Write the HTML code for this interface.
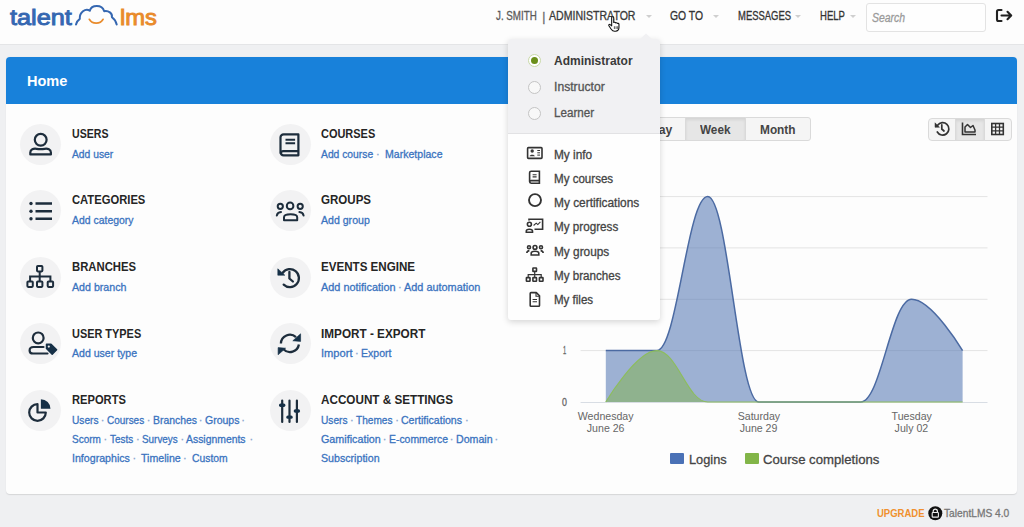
<!DOCTYPE html>
<html><head><meta charset="utf-8">
<style>
*{margin:0;padding:0;box-sizing:border-box}
html,body{width:1024px;height:527px;overflow:hidden;background:#eff0f2;font-family:"Liberation Sans",sans-serif;position:relative}
.abs{position:absolute}
.t{position:absolute;white-space:nowrap;transform-origin:0 0}
#hdr{left:0;top:0;width:1024px;height:45px;background:#fdfdfd;border-bottom:1px solid #e4e5e7}
.caret{position:absolute;top:15px;width:0;height:0;border-left:3px solid transparent;border-right:3px solid transparent;border-top:3px solid #cfcfcf}
#search{left:866px;top:3px;width:120px;height:29px;border:1px solid #e3e3e3;border-radius:3px;background:#fefefe}
#panel{left:6px;top:57px;width:1011px;height:437px;background:#fdfdfd;border-radius:4px;box-shadow:0 0.5px 1px #d5d6d8}
#bluebar{left:6px;top:57px;width:1011px;height:47px;background:#1881da;border-radius:4px 4px 0 0}
.circ{position:absolute;width:41px;height:41px;border-radius:50%;background:#f2f2f3}
.circ svg{position:absolute;left:0;top:0}
#dd{left:508px;top:39px;width:152px;height:281px;background:#fefefe;border-radius:3px;box-shadow:0 2px 6px rgba(0,0,0,0.16)}
#ddtop{left:508px;top:39px;width:152px;height:95px;background:#f1f1f3;border-radius:3px 3px 0 0;border-bottom:1px solid #e2e2e4}
.radio{position:absolute;left:528px;width:13px;height:13px;border-radius:50%;border:1px solid #c4c4c4;background:#f8f8f8}
.btn{position:absolute;height:24px;border:1px solid #dadada;background:#f5f5f5}
</style></head><body>
<div id="hdr" class="abs"></div>
<svg class="abs" style="left:0;top:0" width="160" height="40" viewBox="0 0 160 40">
 <path d="M76 24.5 C76.8 21.8 78 20 79.8 18.8 C79.2 12.8 85.5 7.5 89.8 10.8 C91.5 4.6 102 4.2 104.2 11.2 C108.5 10.4 112.6 13.2 111.9 17.2 C114.2 18.8 116 21.5 116.7 24.5" fill="none" stroke="#3567b1" stroke-width="2" stroke-linecap="round" stroke-linejoin="round"/>
 <path d="M89.4 19.4 C91 22.2 93.2 23.1 96.2 23.1 C99.2 23.1 101.4 22.2 103 19.4" fill="none" stroke="#e98b2b" stroke-width="1.9" stroke-linecap="round"/>
</svg>
<div class="caret" style="left:646px"></div>
<div class="caret" style="left:713px"></div>
<div class="caret" style="left:795px"></div>
<div class="caret" style="left:850px"></div>
<div id="search" class="abs"></div>
<svg class="abs" style="left:995px;top:8px" width="19" height="15" viewBox="0 0 19 15">
 <path d="M6.5 2 H3.5 A1.5 1.5 0 0 0 2 3.5 V11.5 A1.5 1.5 0 0 0 3.5 13 H6.5" fill="none" stroke="#222" stroke-width="2.1" stroke-linecap="round"/>
 <path d="M6.5 7.5 H16 M12.5 3.8 L16.2 7.5 L12.5 11.2" fill="none" stroke="#222" stroke-width="2.1" stroke-linecap="round" stroke-linejoin="round"/>
</svg>

<div id="panel" class="abs"></div>
<div id="bluebar" class="abs"></div>

<!-- icons col1 -->
<div class="circ" style="left:20px;top:123.5px"><svg width="41" height="41" viewBox="0 0 41 41" fill="none" stroke="#1d2d3c" stroke-width="2.2">
 <circle cx="20.7" cy="15.8" r="5.9"/>
 <path d="M10.3 30.4 V28.5 C10.3 25.2 13.5 24.4 16.5 24.8 Q20.6 25.6 24.7 24.8 C27.7 24.4 30.9 25.2 30.9 28.5 V30.4 Z" stroke-linejoin="round"/>
</svg></div>
<div class="circ" style="left:20px;top:190px"><svg width="41" height="41" viewBox="0 0 41 41" fill="none" stroke="#1d2d3c" stroke-width="2.4">
 <path d="M15.5 13.5 H32 M15.5 21.2 H32 M15.5 28.7 H32"/>
 <circle cx="11" cy="13.5" r="1.7" fill="#1d2d3c" stroke="none"/><circle cx="11" cy="21.2" r="1.7" fill="#1d2d3c" stroke="none"/><circle cx="11" cy="28.7" r="1.7" fill="#1d2d3c" stroke="none"/>
</svg></div>
<div class="circ" style="left:20px;top:256.5px"><svg width="41" height="41" viewBox="0 0 41 41" fill="none" stroke="#1d2d3c" stroke-width="2">
 <rect x="17" y="9" width="5.4" height="5.4" rx="0.8"/>
 <rect x="7.4" y="24.5" width="5.4" height="5.4" rx="0.8"/><rect x="17" y="24.5" width="5.4" height="5.4" rx="0.8"/><rect x="27.7" y="24.5" width="5.4" height="5.4" rx="0.8"/>
 <path d="M19.7 14.4 V24.5 M10.1 24.5 V19.5 H30.4 V24.5"/>
</svg></div>
<div class="circ" style="left:20px;top:323px"><svg width="41" height="41" viewBox="0 0 41 41" fill="none" stroke="#1d2d3c" stroke-width="2.2">
 <circle cx="18.2" cy="14.9" r="5.4"/>
 <path d="M23.5 24 H13.5 C11 24 9.6 25.6 9.6 27.4 C9.6 29.3 11 30.5 13 30.5 H27.5" stroke-linecap="round"/>
 <path d="M26.5 21.2 H31 L36.6 26.8 L32.2 31.2 L26.5 25.5 Z" fill="#163047" stroke="#163047" stroke-width="1.5" stroke-linejoin="round"/>
 <circle cx="28.8" cy="23.6" r="1.1" fill="#f0f0f1" stroke="none"/>
</svg></div>
<div class="circ" style="left:20px;top:390px"><svg width="41" height="41" viewBox="0 0 41 41" fill="none" stroke="#1d2d3c" stroke-width="2.2">
 <path d="M17.5 14.2 A8.3 8.3 0 1 0 25.8 22.5 H17.5 Z" stroke-linejoin="round"/>
 <path d="M20.9 18.8 V9.2 A9.6 9.6 0 0 1 30.5 18.8 Z" fill="#163047" stroke="none"/>
</svg></div>

<!-- icons col2 -->
<div class="circ" style="left:269.8px;top:123.5px"><svg width="41" height="41" viewBox="0 0 41 41" fill="none" stroke="#1d2d3c" stroke-width="2.2">
 <path d="M28.4 10.4 H13.6 A3.1 3.1 0 0 0 10.5 13.5 V28.2 A3.1 3.1 0 0 0 13.6 31.3 H28.4 Z" stroke-linejoin="round"/>
 <path d="M10.8 29.5 A2.4 2.4 0 0 1 13.2 27.2 H28.4"/>
 <path d="M15.5 15.8 H25.1 M15.5 19.3 H25.1" stroke-width="2"/>
</svg></div>
<div class="circ" style="left:269.8px;top:190px"><svg width="41" height="41" viewBox="0 0 41 41" fill="none" stroke="#1d2d3c" stroke-width="2">
 <circle cx="20.1" cy="15.9" r="3.3"/>
 <circle cx="10.3" cy="16.3" r="2.6"/><circle cx="30.2" cy="16.3" r="2.6"/>
 <path d="M14 30.2 V27.2 C14 25 16.5 24.3 20.6 24.3 C24.7 24.3 27.2 25 27.2 27.2 V30.2 Z" stroke-linejoin="round"/>
 <path d="M6.8 25.6 C7.2 23.6 8.8 22.3 11 22.1 M33.6 25.6 C33.2 23.6 31.6 22.3 29.4 22.1" stroke-linecap="round"/>
</svg></div>
<div class="circ" style="left:269.8px;top:256.5px"><svg width="41" height="41" viewBox="0 0 41 41" fill="none" stroke="#1d2d3c" stroke-width="2.3">
 <path d="M12.7 15.7 A9 9 0 1 1 13.7 27.6" stroke-linecap="round"/>
 <path d="M7.8 11.8 V18.2 H14.8 Z" fill="#163047" stroke="#163047" stroke-width="0.6" stroke-linejoin="round"/>
 <path d="M19.4 15 V21.5 L22.9 24.5" stroke-linecap="round" stroke-linejoin="round"/>
</svg></div>
<div class="circ" style="left:269.8px;top:323px"><svg width="41" height="41" viewBox="0 0 41 41" fill="none" stroke="#1d2d3c" stroke-width="2.3">
 <path d="M10.9 20.5 A9 9 0 0 1 26 14.2"/>
 <path d="M22.8 17.8 L30.6 10.8 V18.4 Z" fill="#163047" stroke="#163047" stroke-width="0.6" stroke-linejoin="round"/>
 <path d="M28.9 21.5 A9 9 0 0 1 13.5 26.2"/>
 <path d="M8.1 24.6 V31.8 L15.6 25.2 Z" fill="#163047" stroke="#163047" stroke-width="0.6" stroke-linejoin="round"/>
</svg></div>
<div class="circ" style="left:269.8px;top:390px"><svg width="41" height="41" viewBox="0 0 41 41" fill="none" stroke="#1d2d3c" stroke-width="2.2">
 <path d="M12.2 10.5 V32 M19.5 10.5 V32 M26.9 10.5 V32" stroke-linecap="round"/>
 <rect x="9" y="13.5" width="6.4" height="3.4" rx="1.6" fill="#163047" stroke="none"/>
 <rect x="16.3" y="25.4" width="6.4" height="3.4" rx="1.6" fill="#163047" stroke="none"/>
 <rect x="23.7" y="19.3" width="6.4" height="3.4" rx="1.6" fill="#163047" stroke="none"/>
</svg></div>

<!-- chart buttons -->
<div class="btn" style="left:600px;top:117px;width:86px;border-radius:3px 0 0 3px"></div>
<div class="btn" style="left:685.3px;top:117px;width:60.5px;background:#e6e6e6;box-shadow:inset 0 2px 3px rgba(0,0,0,0.08)"></div>
<div class="btn" style="left:745px;top:117px;width:66.3px;border-radius:0 3px 3px 0"></div>
<div class="btn" style="left:927.8px;top:117.5px;width:28px;height:23px;border-radius:4px 0 0 4px"></div>
<div class="btn" style="left:955px;top:117.5px;width:29.5px;height:23px;background:#e6e6e6;box-shadow:inset 0 2px 3px rgba(0,0,0,0.08)"></div>
<div class="btn" style="left:983.5px;top:117.5px;width:28px;height:23px;border-radius:0 4px 4px 0"></div>
<svg class="abs" style="left:930px;top:118px" width="80" height="22" viewBox="0 0 80 22" fill="none" stroke="#333" stroke-width="1.7">
 <path d="M7.6 7.3 A6.2 6.2 0 1 1 7.3 14" stroke-linecap="round"/>
 <path d="M5 4.8 V9.3 H9.5 Z" fill="#333" stroke="#333" stroke-width="0.5"/>
 <path d="M11.8 6.8 V11 L14 13" stroke-linecap="round"/>
 <path d="M32.5 4.5 V16.5 H46" stroke-width="1.6"/>
 <path d="M35 14 V9 L37.5 6.5 L40.5 9.5 L43 7.5 L45 12 V14 Z" stroke-width="1.5" stroke-linejoin="round"/>
 <rect x="61.8" y="5.5" width="11.5" height="11" stroke-width="1.6"/>
 <path d="M61.8 9.2 H73.3 M61.8 12.9 H73.3 M65.6 5.5 V16.5 M69.5 5.5 V16.5" stroke-width="1.3"/>
</svg>

<svg class="abs" style="left:0;top:0" width="1024" height="527" viewBox="0 0 1024 527">
<line x1="580.6" x2="987.5" y1="350.6" y2="350.6" stroke="#e4e4e4" stroke-width="1"/><line x1="580.6" x2="987.5" y1="299.3" y2="299.3" stroke="#e4e4e4" stroke-width="1"/><line x1="580.6" x2="987.5" y1="247.9" y2="247.9" stroke="#e4e4e4" stroke-width="1"/><line x1="580.6" x2="987.5" y1="196.6" y2="196.6" stroke="#e4e4e4" stroke-width="1"/><line x1="580.6" x2="987.5" y1="402.5" y2="402.5" stroke="#d8dde4" stroke-width="1"/>
<path d="M 605.8 350.6 C 605.8 350.6 636.4 350.6 656.8 350.6 C 677.2 350.6 687.4 196.6 707.7 196.6 C 728.1 196.6 738.3 402.0 758.7 402.0 C 779.1 402.0 789.3 402.0 809.7 402.0 C 830.1 402.0 840.3 402.0 860.6 402.0 C 881.0 402.0 891.2 299.3 911.6 299.3 C 932.0 299.3 962.6 350.6 962.6 350.6 L 962.6 402.0 L 605.8 402.0 Z" fill="rgba(79,115,177,0.55)"/>
<path d="M 605.8 350.6 C 605.8 350.6 636.4 350.6 656.8 350.6 C 677.2 350.6 687.4 196.6 707.7 196.6 C 728.1 196.6 738.3 402.0 758.7 402.0 C 779.1 402.0 789.3 402.0 809.7 402.0 C 830.1 402.0 840.3 402.0 860.6 402.0 C 881.0 402.0 891.2 299.3 911.6 299.3 C 932.0 299.3 962.6 350.6 962.6 350.6" fill="none" stroke="#4b6aa2" stroke-width="1.5"/>
<path d="M 605.8 402.0 C 605.8 402.0 636.4 350.6 656.8 350.6 C 677.2 350.6 687.4 402.0 707.7 402.0 C 728.1 402.0 738.3 402.0 758.7 402.0 C 779.1 402.0 789.3 402.0 809.7 402.0 C 830.1 402.0 840.3 402.0 860.6 402.0 C 881.0 402.0 891.2 402.0 911.6 402.0 C 932.0 402.0 962.6 402.0 962.6 402.0 L 962.6 402.0 L 605.8 402.0 Z" fill="rgba(133,178,96,0.6)"/>
<path d="M 605.8 402.0 C 605.8 402.0 636.4 350.6 656.8 350.6 C 677.2 350.6 687.4 402.0 707.7 402.0 C 728.1 402.0 738.3 402.0 758.7 402.0 C 779.1 402.0 789.3 402.0 809.7 402.0 C 830.1 402.0 840.3 402.0 860.6 402.0 C 881.0 402.0 891.2 402.0 911.6 402.0 C 932.0 402.0 962.6 402.0 962.6 402.0" fill="none" stroke="#8dbd5e" stroke-width="1.1"/>
</svg>
<!-- legend squares -->
<div class="abs" style="left:670px;top:452.8px;width:14px;height:11.5px;background:#4a71b6;border-radius:1px"></div>
<div class="abs" style="left:744.5px;top:452.8px;width:14px;height:11.5px;background:#82b548;border-radius:1px"></div>

<!-- footer lock -->
<svg class="abs" style="left:927.5px;top:505.5px" width="15" height="15" viewBox="0 0 15 15">
 <circle cx="7.3" cy="7.3" r="7" fill="#111"/>
 <path d="M5.2 6.5 V5.2 A2.1 2.1 0 0 1 9.4 5.2 V6.5" fill="none" stroke="#eee" stroke-width="1.2"/>
 <rect x="4.2" y="6.5" width="6.2" height="4.6" rx="0.7" fill="none" stroke="#eee" stroke-width="1.1"/>
</svg>

<div class="t" id="t0" style="left:495.9px;top:10.28px;font-size:12px;line-height:12px;font-weight:normal;color:#5b5b5b;transform:scaleX(0.8160);-webkit-text-stroke:0.3px #5b5b5b;">J. SMITH</div>
<div class="t" id="t1" style="left:542.2px;top:10.98px;font-size:12px;line-height:12px;font-weight:normal;color:#666;-webkit-text-stroke:0.3px #666;">|</div>
<div class="t" id="t2" style="left:549px;top:10.28px;font-size:12px;line-height:12px;font-weight:normal;color:#3a3a3a;transform:scaleX(0.8806);-webkit-text-stroke:0.3px #3a3a3a;">ADMINISTRATOR</div>
<div class="t" id="t3" style="left:669.8px;top:10.28px;font-size:12px;line-height:12px;font-weight:normal;color:#333;transform:scaleX(0.8632);-webkit-text-stroke:0.3px #333;">GO TO</div>
<div class="t" id="t4" style="left:737.7px;top:10.28px;font-size:12px;line-height:12px;font-weight:normal;color:#333;transform:scaleX(0.7881);-webkit-text-stroke:0.3px #333;">MESSAGES</div>
<div class="t" id="t5" style="left:820px;top:10.28px;font-size:12px;line-height:12px;font-weight:normal;color:#333;transform:scaleX(0.7935);-webkit-text-stroke:0.3px #333;">HELP</div>
<div class="t" id="t6" style="left:872px;top:11.68px;font-size:12px;line-height:12px;font-weight:normal;color:#9a9a9a;transform:scaleX(0.8684);font-style:italic;-webkit-text-stroke:0.3px #9a9a9a;">Search</div>
<div class="t" id="t7" style="left:9.7px;top:7.51px;font-size:21.5px;line-height:21.5px;font-weight:normal;color:#3567b1;transform:scaleX(1.1755);-webkit-text-stroke:0.9px #3567b1;">talent</div>
<div class="t" id="t8" style="left:119.5px;top:7.51px;font-size:21.5px;line-height:21.5px;font-weight:normal;color:#e98b2b;transform:scaleX(1.1061);-webkit-text-stroke:0.9px #e98b2b;">lms</div>
<div class="t" id="t9" style="left:26.5px;top:73.17px;font-size:15.5px;line-height:15.5px;font-weight:bold;color:#fff;transform:scaleX(0.9372);">Home</div>
<div class="t" id="t10" style="left:71.8px;top:127.75px;font-size:12.5px;line-height:12.5px;font-weight:bold;color:#252525;transform:scaleX(0.8465);">USERS</div>
<div class="t" id="t11" style="left:71.8px;top:194.40px;font-size:12.5px;line-height:12.5px;font-weight:bold;color:#252525;transform:scaleX(0.8976);">CATEGORIES</div>
<div class="t" id="t12" style="left:71.8px;top:261.05px;font-size:12.5px;line-height:12.5px;font-weight:bold;color:#252525;transform:scaleX(0.9056);">BRANCHES</div>
<div class="t" id="t13" style="left:71.8px;top:327.70px;font-size:12.5px;line-height:12.5px;font-weight:bold;color:#252525;transform:scaleX(0.8734);">USER TYPES</div>
<div class="t" id="t14" style="left:71.8px;top:394.35px;font-size:12.5px;line-height:12.5px;font-weight:bold;color:#252525;transform:scaleX(0.8917);">REPORTS</div>
<div class="t" id="t15" style="left:320.8px;top:127.75px;font-size:12.5px;line-height:12.5px;font-weight:bold;color:#252525;transform:scaleX(0.8774);">COURSES</div>
<div class="t" id="t16" style="left:320.8px;top:194.40px;font-size:12.5px;line-height:12.5px;font-weight:bold;color:#252525;transform:scaleX(0.9241);">GROUPS</div>
<div class="t" id="t17" style="left:320.8px;top:261.05px;font-size:12.5px;line-height:12.5px;font-weight:bold;color:#252525;transform:scaleX(0.9277);">EVENTS ENGINE</div>
<div class="t" id="t18" style="left:320.8px;top:327.70px;font-size:12.5px;line-height:12.5px;font-weight:bold;color:#252525;transform:scaleX(0.9396);">IMPORT - EXPORT</div>
<div class="t" id="t19" style="left:320.8px;top:394.35px;font-size:12.5px;line-height:12.5px;font-weight:bold;color:#252525;transform:scaleX(0.9362);">ACCOUNT &amp; SETTINGS</div>
<div class="t" id="t20" style="left:71.8px;top:148.54px;font-size:11px;line-height:11px;font-weight:normal;color:#3a73bf;transform:scaleX(0.9364);-webkit-text-stroke:0.3px #3a73bf;">Add user</div>
<div class="t" id="t21" style="left:71.8px;top:215.19px;font-size:11px;line-height:11px;font-weight:normal;color:#3a73bf;transform:scaleX(0.9492);-webkit-text-stroke:0.3px #3a73bf;">Add category</div>
<div class="t" id="t22" style="left:71.8px;top:281.84px;font-size:11px;line-height:11px;font-weight:normal;color:#3a73bf;transform:scaleX(0.9679);-webkit-text-stroke:0.3px #3a73bf;">Add branch</div>
<div class="t" id="t23" style="left:71.8px;top:348.49px;font-size:11px;line-height:11px;font-weight:normal;color:#3a73bf;transform:scaleX(0.9588);-webkit-text-stroke:0.3px #3a73bf;">Add user type</div>
<div class="t" id="t24" style="left:71.5px;top:415.14px;font-size:11px;line-height:11px;font-weight:normal;color:#3a73bf;transform:scaleX(0.9241);-webkit-text-stroke:0.3px #3a73bf;">Users</div>
<div class="t" id="t25" style="left:106.6px;top:415.14px;font-size:11px;line-height:11px;font-weight:normal;color:#3a73bf;transform:scaleX(0.9073);-webkit-text-stroke:0.3px #3a73bf;">Courses</div>
<div class="t" id="t26" style="left:152.5px;top:415.14px;font-size:11px;line-height:11px;font-weight:normal;color:#3a73bf;transform:scaleX(0.9457);-webkit-text-stroke:0.3px #3a73bf;">Branches</div>
<div class="t" id="t27" style="left:204.6px;top:415.14px;font-size:11px;line-height:11px;font-weight:normal;color:#3a73bf;transform:scaleX(0.9556);-webkit-text-stroke:0.3px #3a73bf;">Groups</div>
<div class="t" id="t28" style="left:100.8px;top:415.14px;font-size:11px;line-height:11px;font-weight:normal;color:#8aa6cf;-webkit-text-stroke:0.3px #8aa6cf;">·</div>
<div class="t" id="t29" style="left:146.7px;top:415.14px;font-size:11px;line-height:11px;font-weight:normal;color:#8aa6cf;-webkit-text-stroke:0.3px #8aa6cf;">·</div>
<div class="t" id="t30" style="left:198.8px;top:415.14px;font-size:11px;line-height:11px;font-weight:normal;color:#8aa6cf;-webkit-text-stroke:0.3px #8aa6cf;">·</div>
<div class="t" id="t31" style="left:241.2px;top:415.14px;font-size:11px;line-height:11px;font-weight:normal;color:#8aa6cf;-webkit-text-stroke:0.3px #8aa6cf;">·</div>
<div class="t" id="t32" style="left:71.5px;top:434.14px;font-size:11px;line-height:11px;font-weight:normal;color:#3a73bf;transform:scaleX(0.9094);-webkit-text-stroke:0.3px #3a73bf;">Scorm</div>
<div class="t" id="t33" style="left:109.6px;top:434.14px;font-size:11px;line-height:11px;font-weight:normal;color:#3a73bf;transform:scaleX(0.9000);-webkit-text-stroke:0.3px #3a73bf;">Tests</div>
<div class="t" id="t34" style="left:141.8px;top:434.14px;font-size:11px;line-height:11px;font-weight:normal;color:#3a73bf;transform:scaleX(0.9000);-webkit-text-stroke:0.3px #3a73bf;">Surveys</div>
<div class="t" id="t35" style="left:186.4px;top:434.14px;font-size:11px;line-height:11px;font-weight:normal;color:#3a73bf;transform:scaleX(0.9460);-webkit-text-stroke:0.3px #3a73bf;">Assignments</div>
<div class="t" id="t36" style="left:103.6px;top:434.14px;font-size:11px;line-height:11px;font-weight:normal;color:#8aa6cf;-webkit-text-stroke:0.3px #8aa6cf;">·</div>
<div class="t" id="t37" style="left:135.9px;top:434.14px;font-size:11px;line-height:11px;font-weight:normal;color:#8aa6cf;-webkit-text-stroke:0.3px #8aa6cf;">·</div>
<div class="t" id="t38" style="left:180.6px;top:434.14px;font-size:11px;line-height:11px;font-weight:normal;color:#8aa6cf;-webkit-text-stroke:0.3px #8aa6cf;">·</div>
<div class="t" id="t39" style="left:249.5px;top:434.14px;font-size:11px;line-height:11px;font-weight:normal;color:#8aa6cf;-webkit-text-stroke:0.3px #8aa6cf;">·</div>
<div class="t" id="t40" style="left:71.5px;top:453.14px;font-size:11px;line-height:11px;font-weight:normal;color:#3a73bf;transform:scaleX(0.9667);-webkit-text-stroke:0.3px #3a73bf;">Infographics</div>
<div class="t" id="t41" style="left:140.6px;top:453.14px;font-size:11px;line-height:11px;font-weight:normal;color:#3a73bf;transform:scaleX(0.9659);-webkit-text-stroke:0.3px #3a73bf;">Timeline</div>
<div class="t" id="t42" style="left:191.5px;top:453.14px;font-size:11px;line-height:11px;font-weight:normal;color:#3a73bf;transform:scaleX(0.9395);-webkit-text-stroke:0.3px #3a73bf;">Custom</div>
<div class="t" id="t43" style="left:132.5px;top:453.14px;font-size:11px;line-height:11px;font-weight:normal;color:#8aa6cf;-webkit-text-stroke:0.3px #8aa6cf;">·</div>
<div class="t" id="t44" style="left:183.0px;top:453.14px;font-size:11px;line-height:11px;font-weight:normal;color:#8aa6cf;-webkit-text-stroke:0.3px #8aa6cf;">·</div>
<div class="t" id="t45" style="left:321px;top:148.54px;font-size:11px;line-height:11px;font-weight:normal;color:#3a73bf;transform:scaleX(0.9375);-webkit-text-stroke:0.3px #3a73bf;">Add course</div>
<div class="t" id="t46" style="left:385px;top:148.54px;font-size:11px;line-height:11px;font-weight:normal;color:#3a73bf;transform:scaleX(0.9600);-webkit-text-stroke:0.3px #3a73bf;">Marketplace</div>
<div class="t" id="t47" style="left:376.0px;top:148.54px;font-size:11px;line-height:11px;font-weight:normal;color:#8aa6cf;-webkit-text-stroke:0.3px #8aa6cf;">·</div>
<div class="t" id="t48" style="left:321px;top:215.19px;font-size:11px;line-height:11px;font-weight:normal;color:#3a73bf;transform:scaleX(0.9608);-webkit-text-stroke:0.3px #3a73bf;">Add group</div>
<div class="t" id="t49" style="left:321px;top:281.84px;font-size:11px;line-height:11px;font-weight:normal;color:#3a73bf;transform:scaleX(0.9907);-webkit-text-stroke:0.3px #3a73bf;">Add notification</div>
<div class="t" id="t50" style="left:403.5px;top:281.84px;font-size:11px;line-height:11px;font-weight:normal;color:#3a73bf;transform:scaleX(0.9896);-webkit-text-stroke:0.3px #3a73bf;">Add automation</div>
<div class="t" id="t51" style="left:398.0px;top:281.84px;font-size:11px;line-height:11px;font-weight:normal;color:#8aa6cf;-webkit-text-stroke:0.3px #8aa6cf;">·</div>
<div class="t" id="t52" style="left:321px;top:348.49px;font-size:11px;line-height:11px;font-weight:normal;color:#3a73bf;transform:scaleX(1.0097);-webkit-text-stroke:0.3px #3a73bf;">Import</div>
<div class="t" id="t53" style="left:361px;top:348.49px;font-size:11px;line-height:11px;font-weight:normal;color:#3a73bf;transform:scaleX(0.9563);-webkit-text-stroke:0.3px #3a73bf;">Export</div>
<div class="t" id="t54" style="left:355.0px;top:348.49px;font-size:11px;line-height:11px;font-weight:normal;color:#8aa6cf;-webkit-text-stroke:0.3px #8aa6cf;">·</div>
<div class="t" id="t55" style="left:320.6px;top:415.14px;font-size:11px;line-height:11px;font-weight:normal;color:#3a73bf;transform:scaleX(0.9241);-webkit-text-stroke:0.3px #3a73bf;">Users</div>
<div class="t" id="t56" style="left:355.7px;top:415.14px;font-size:11px;line-height:11px;font-weight:normal;color:#3a73bf;transform:scaleX(0.9175);-webkit-text-stroke:0.3px #3a73bf;">Themes</div>
<div class="t" id="t57" style="left:401px;top:415.14px;font-size:11px;line-height:11px;font-weight:normal;color:#3a73bf;transform:scaleX(0.9594);-webkit-text-stroke:0.3px #3a73bf;">Certifications</div>
<div class="t" id="t58" style="left:350.0px;top:415.14px;font-size:11px;line-height:11px;font-weight:normal;color:#8aa6cf;-webkit-text-stroke:0.3px #8aa6cf;">·</div>
<div class="t" id="t59" style="left:395.2px;top:415.14px;font-size:11px;line-height:11px;font-weight:normal;color:#8aa6cf;-webkit-text-stroke:0.3px #8aa6cf;">·</div>
<div class="t" id="t60" style="left:465.0px;top:415.14px;font-size:11px;line-height:11px;font-weight:normal;color:#8aa6cf;-webkit-text-stroke:0.3px #8aa6cf;">·</div>
<div class="t" id="t61" style="left:320.6px;top:434.14px;font-size:11px;line-height:11px;font-weight:normal;color:#3a73bf;transform:scaleX(0.9770);-webkit-text-stroke:0.3px #3a73bf;">Gamification</div>
<div class="t" id="t62" style="left:388.5px;top:434.14px;font-size:11px;line-height:11px;font-weight:normal;color:#3a73bf;transform:scaleX(0.9468);-webkit-text-stroke:0.3px #3a73bf;">E-commerce</div>
<div class="t" id="t63" style="left:455.5px;top:434.14px;font-size:11px;line-height:11px;font-weight:normal;color:#3a73bf;transform:scaleX(0.9658);-webkit-text-stroke:0.3px #3a73bf;">Domain</div>
<div class="t" id="t64" style="left:382.8px;top:434.14px;font-size:11px;line-height:11px;font-weight:normal;color:#8aa6cf;-webkit-text-stroke:0.3px #8aa6cf;">·</div>
<div class="t" id="t65" style="left:449.8px;top:434.14px;font-size:11px;line-height:11px;font-weight:normal;color:#8aa6cf;-webkit-text-stroke:0.3px #8aa6cf;">·</div>
<div class="t" id="t66" style="left:494.5px;top:434.14px;font-size:11px;line-height:11px;font-weight:normal;color:#8aa6cf;-webkit-text-stroke:0.3px #8aa6cf;">·</div>
<div class="t" id="t67" style="left:320.6px;top:453.14px;font-size:11px;line-height:11px;font-weight:normal;color:#3a73bf;transform:scaleX(0.9672);-webkit-text-stroke:0.3px #3a73bf;">Subscription</div>
<div class="t" id="t68" style="left:650px;top:124.21px;font-size:12.2px;line-height:12.2px;font-weight:bold;color:#444;">Day</div>
<div class="t" id="t69" style="left:700px;top:124.21px;font-size:12.2px;line-height:12.2px;font-weight:bold;color:#444;transform:scaleX(0.9625);">Week</div>
<div class="t" id="t70" style="left:760px;top:124.21px;font-size:12.2px;line-height:12.2px;font-weight:bold;color:#444;transform:scaleX(0.9730);">Month</div>
<div class="t" id="t71" style="left:562.6px;top:345.73px;font-size:10.2px;line-height:10.2px;font-weight:normal;color:#666;transform:scaleX(0.5667);-webkit-text-stroke:0.3px #666;">1</div>
<div class="t" id="t72" style="left:561.6px;top:397.53px;font-size:10.2px;line-height:10.2px;font-weight:normal;color:#666;transform:scaleX(0.8667);-webkit-text-stroke:0.3px #666;">0</div>
<div class="t" id="t73" style="left:577.80px;top:410.68px;font-size:10.6px;line-height:10.6px;font-weight:normal;color:#666;">Wednesday</div>
<div class="t" id="t74" style="left:586.80px;top:423.28px;font-size:10.6px;line-height:10.6px;font-weight:normal;color:#666;">June 26</div>
<div class="t" id="t75" style="left:737.70px;top:410.68px;font-size:10.6px;line-height:10.6px;font-weight:normal;color:#666;">Saturday</div>
<div class="t" id="t76" style="left:739.70px;top:423.28px;font-size:10.6px;line-height:10.6px;font-weight:normal;color:#666;">June 29</div>
<div class="t" id="t77" style="left:891.60px;top:410.68px;font-size:10.6px;line-height:10.6px;font-weight:normal;color:#666;">Tuesday</div>
<div class="t" id="t78" style="left:894.60px;top:423.28px;font-size:10.6px;line-height:10.6px;font-weight:normal;color:#666;">July 02</div>
<div class="t" id="t79" style="left:688.8px;top:452.79px;font-size:13.5px;line-height:13.5px;font-weight:normal;color:#444;transform:scaleX(0.9475);-webkit-text-stroke:0.3px #444;">Logins</div>
<div class="t" id="t80" style="left:762.9px;top:452.79px;font-size:13.5px;line-height:13.5px;font-weight:normal;color:#444;transform:scaleX(0.9756);-webkit-text-stroke:0.3px #444;">Course completions</div>
<div class="t" id="t81" style="left:877.3px;top:507.77px;font-size:11.2px;line-height:11.2px;font-weight:bold;color:#f0902e;transform:scaleX(0.8500);">UPGRADE</div>
<div class="t" id="t82" style="left:944px;top:507.51px;font-size:11.5px;line-height:11.5px;font-weight:normal;color:#777;transform:scaleX(0.8878);-webkit-text-stroke:0.3px #777;">TalentLMS 4.0</div>

<!-- dropdown -->
<div id="dd" class="abs"></div>
<div id="ddtop" class="abs"></div>
<svg class="abs" style="left:638px;top:33px" width="16" height="7" viewBox="0 0 16 7"><path d="M1 7 L8 0.5 L15 7 Z" fill="#f1f1f3"/></svg>
<div class="radio" style="top:54.2px;border-color:#c9d9a8;background:#fff"></div>
<div class="abs" style="left:531px;top:57.2px;width:7px;height:7px;border-radius:50%;background:#6b8f1a"></div>
<div class="radio" style="top:80.5px"></div>
<div class="radio" style="top:106.8px"></div>
<svg class="abs" style="left:520px;top:140px" width="30" height="175" viewBox="0 0 30 175" fill="none" stroke="#333" stroke-width="1.6">
 <!-- id card -->
 <rect x="7.6" y="7.6" width="14.4" height="10.8" rx="0.8"/>
 <circle cx="12.2" cy="11" r="1.7" fill="#3a3a3a" stroke="none"/>
 <path d="M9.5 16.3 C9.6 14.2 14.8 14.2 14.9 16.3 Z" fill="#3a3a3a" stroke="none"/>
 <path d="M17.3 10.5 H20 M17.3 12.8 H20 M17.3 15.1 H20" stroke-width="1"/>
 <!-- book -->
 <path d="M19.4 31.2 H11.2 A1.6 1.6 0 0 0 9.6 32.8 V41.6 A1.6 1.6 0 0 0 11.2 43.2 H19.4 Z"/>
 <path d="M9.8 41.7 A1.2 1.2 0 0 1 11 40.6 H19.4"/>
 <path d="M12.6 34.8 H16.6 M12.6 36.9 H16.6" stroke-width="1.1"/>
 <!-- cert circle -->
 <circle cx="15" cy="60.1" r="6" stroke-width="1.9"/>
 <!-- progress -->
 <circle cx="9.4" cy="84.3" r="2" />
 <path d="M6.3 92.3 V91 C6.3 89.8 7.5 89.2 9.4 89.2 C11.3 89.2 12.5 89.8 12.5 91 V92.3 Z"/>
 <path d="M9 80.5 V79.2 H22.6 V89.2 H14.5"/>
 <path d="M13.6 85.5 L16.2 83.2 L17.8 84.6 L20.4 81.9" stroke-width="1.1"/>
 <!-- groups -->
 <circle cx="15" cy="107.4" r="1.9"/><circle cx="9" cy="107.2" r="1.5"/><circle cx="21" cy="107.2" r="1.5"/>
 <path d="M11.2 115 V113.2 C11.2 111.8 12.8 111.2 15 111.2 C17.2 111.2 18.8 111.8 18.8 113.2 V115 Z"/>
 <path d="M6.8 113 C7 111.5 8 110.7 9.4 110.6 M23.2 113 C23 111.5 22 110.7 20.6 110.6"/>
 <!-- branches -->
 <rect x="12.9" y="128" width="3.6" height="3.4" rx="0.4"/>
 <rect x="6.4" y="137.6" width="3.6" height="3.6" rx="0.4"/><rect x="12.9" y="137.6" width="3.6" height="3.6" rx="0.4"/><rect x="19.4" y="137.6" width="3.6" height="3.6" rx="0.4"/>
 <path d="M14.7 131.4 V137.6 M8.2 137.6 V134.6 H21.2 V137.6" stroke-width="1.2"/>
 <!-- files -->
 <path d="M11 152.6 H16.3 L19.5 155.8 V165.4 A0.8 0.8 0 0 1 18.7 166.2 H11 A0.8 0.8 0 0 1 10.2 165.4 V153.4 A0.8 0.8 0 0 1 11 152.6 Z" stroke-linejoin="round"/>
 <path d="M16 152.8 V156.2 H19.4" stroke-width="1.1"/>
 <path d="M12.6 159.5 H17 M12.6 161.8 H17" stroke-width="1.1"/>
</svg>
<div class="t" id="t83" style="left:553.5px;top:54.98px;font-size:12px;line-height:12px;font-weight:bold;color:#3a3a3a;transform:scaleX(0.9987);">Administrator</div>
<div class="t" id="t84" style="left:553.7px;top:81.38px;font-size:12px;line-height:12px;font-weight:normal;color:#555;transform:scaleX(1.0140);-webkit-text-stroke:0.3px #555;">Instructor</div>
<div class="t" id="t85" style="left:553.7px;top:107.38px;font-size:12px;line-height:12px;font-weight:normal;color:#555;transform:scaleX(0.9683);-webkit-text-stroke:0.3px #555;">Learner</div>
<div class="t" id="t86" style="left:553.5px;top:148.68px;font-size:12px;line-height:12px;font-weight:normal;color:#444;transform:scaleX(0.9872);-webkit-text-stroke:0.3px #444;">My info</div>
<div class="t" id="t87" style="left:553.5px;top:172.93px;font-size:12px;line-height:12px;font-weight:normal;color:#444;transform:scaleX(0.9639);-webkit-text-stroke:0.3px #444;">My courses</div>
<div class="t" id="t88" style="left:553.5px;top:197.18px;font-size:12px;line-height:12px;font-weight:normal;color:#444;transform:scaleX(0.9907);-webkit-text-stroke:0.3px #444;">My certifications</div>
<div class="t" id="t89" style="left:553.5px;top:221.43px;font-size:12px;line-height:12px;font-weight:normal;color:#444;transform:scaleX(0.9727);-webkit-text-stroke:0.3px #444;">My progress</div>
<div class="t" id="t90" style="left:553.5px;top:245.68px;font-size:12px;line-height:12px;font-weight:normal;color:#444;transform:scaleX(0.9857);-webkit-text-stroke:0.3px #444;">My groups</div>
<div class="t" id="t91" style="left:553.5px;top:269.93px;font-size:12px;line-height:12px;font-weight:normal;color:#444;transform:scaleX(0.9681);-webkit-text-stroke:0.3px #444;">My branches</div>
<div class="t" id="t92" style="left:553.5px;top:294.18px;font-size:12px;line-height:12px;font-weight:normal;color:#444;transform:scaleX(0.9610);-webkit-text-stroke:0.3px #444;">My files</div>

<!-- cursor -->
<svg class="abs" style="left:606px;top:14.5px" width="18" height="18" viewBox="0 0 20 20">
 <path d="M6.5 2.2 C7.5 1.5 8.6 2 8.6 3.2 V8.3 C9.2 7.8 10.4 8 10.6 8.8 C11.2 8.3 12.4 8.6 12.5 9.4 C13.1 9 14.3 9.3 14.4 10.2 V14 C14.4 16.5 13 18 10.5 18 H9.5 C7.8 18 6.8 17.2 5.8 15.8 L3.2 12 C2.6 11.1 3.6 10 4.6 10.7 L6.3 12.1 V3.2 C6.3 2.8 6.3 2.4 6.5 2.2 Z" fill="#fff" stroke="#111" stroke-width="1.2" stroke-linejoin="round"/>
 <path d="M9.3 12.5 V15.5 M11.2 12.5 V15.5 M13 12.5 V15.5" stroke="#111" stroke-width="0.8"/>
</svg>
</body></html>
